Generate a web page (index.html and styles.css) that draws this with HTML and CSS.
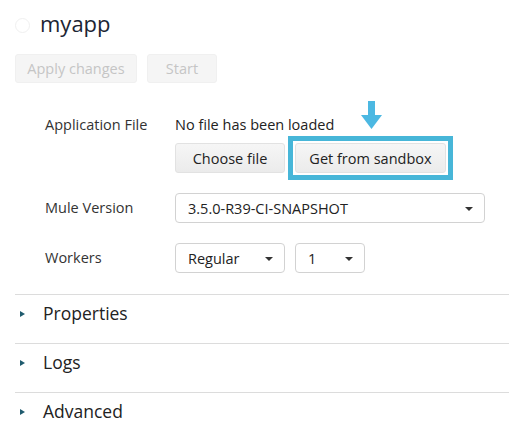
FILE: index.html
```html
<!DOCTYPE html>
<html>
<head>
<meta charset="utf-8">
<link rel="stylesheet" href="styles.css">
</head>
<body>
<div class="page">
  <div class="header">
    <span class="status"></span>
    <h1 class="title">myapp</h1>
  </div>
  <div class="actions">
    <button class="btn btn-disabled btn-apply">Apply changes</button>
    <button class="btn btn-disabled btn-start">Start</button>
  </div>
  <div class="form">
    <div class="label">Application File</div>
    <div class="value">
      <div class="file-status">No file has been loaded</div>
      <div class="file-buttons">
        <button class="btn btn-light btn-choose">Choose file</button>
        <span class="highlight">
          <svg class="arrow" width="22" height="30" viewBox="0 0 22 30">
            <rect x="7" y="0" width="7" height="15" fill="#4cb8e2"/>
            <polygon points="0,14 21,14 10.5,28" fill="#4cb8e2"/>
          </svg>
          <button class="btn btn-light btn-sandbox">Get from sandbox</button>
        </span>
      </div>
    </div>
    <div class="label label-mid">Mule Version</div>
    <div class="value">
      <div class="select select-wide"><span>3.5.0-R39-CI-SNAPSHOT</span><i class="caret"></i></div>
    </div>
    <div class="label label-mid">Workers</div>
    <div class="value workers">
      <div class="select select-type"><span>Regular</span><i class="caret"></i></div>
      <div class="select select-count"><span>1</span><i class="caret"></i></div>
    </div>
  </div>
  <div class="sections">
    <div class="section"><i class="tri"></i><span>Properties</span></div>
    <div class="section"><i class="tri"></i><span>Logs</span></div>
    <div class="section"><i class="tri"></i><span>Advanced</span></div>
  </div>
</div>
</body>
</html>
```
FILE: styles.css
```css
* { box-sizing: border-box; }
html, body { margin: 0; padding: 0; background: #fff; }
body {
  font-family: "Open Sans", "Liberation Sans", sans-serif;
  color: #333;
  font-size: 14.5px;
}
.page { width: 509px; height: 447px; overflow: hidden; }

.header {
  display: flex;
  align-items: center;
  padding: 5px 0 0 15px;
  height: 40px;
}
.status {
  width: 15px; height: 15px;
  border-radius: 50%;
  border: 1px solid #f0f0f0;
  margin-right: 10px;
  margin-top: 5px;
}
.title {
  margin: 0;
  font-size: 22px;
  font-weight: 400;
  color: #1c2533;
  line-height: 30px;
}

.actions {
  display: flex;
  gap: 10px;
  padding: 14px 0 0 15px;
}
.btn {
  font-family: "Open Sans", "Liberation Sans", sans-serif;
  font-size: 14.5px;
  border-radius: 3px;
  padding: 0;
  cursor: default;
}
.btn-disabled {
  height: 29px;
  background: #f5f5f5;
  border: 1px solid #f0f0f0;
  color: #c5c5c5;
}
.btn-apply { width: 122px; }
.btn-start { width: 70px; }

.form {
  display: grid;
  grid-template-columns: 130px 310px;
  margin: 32px 0 0 45px;
  row-gap: 20px;
  align-items: start;
}
.label { line-height: 20px; color: #333; }
.label-mid { align-self: center; }
.file-status { line-height: 20px; color: #222; }
.file-buttons {
  display: flex;
  align-items: center;
  gap: 10px;
  margin-top: 8px;
}
.btn-light {
  height: 30px;
  background: linear-gradient(#f6f6f6, #ebebeb);
  border: 1px solid #e2e2e2;
  color: #222;
}
.btn-choose { width: 110px; }
.btn-sandbox { width: 151px; display: block; }
.highlight {
  position: relative;
  display: block;
  outline: 5px solid #47b6d8;
  outline-offset: 2px;
}
.arrow {
  position: absolute;
  left: 66px;
  top: -42px;
}

.select {
  height: 30px;
  border: 1px solid #d2d2d2;
  border-radius: 4px;
  background: #fff;
  display: flex;
  align-items: center;
  justify-content: space-between;
  padding: 0 11px 0 12px;
  color: #222;
}
.select-wide { width: 310px; }
.workers { display: flex; gap: 10px; }
.select-type { width: 110px; }
.select-count { width: 70px; }
.caret {
  width: 0; height: 0;
  border-left: 4px solid transparent;
  border-right: 4px solid transparent;
  border-top: 4px solid #333;
  margin-top: 1px;
}

.sections { margin: 21px 0 0 15px; }
.section {
  border-top: 1px solid #dcdcdc;
  height: 49px;
  display: flex;
  padding-top: 6px;
  align-items: flex-start;
  line-height: 24px;
  font-size: 17.5px;
  color: #222;
}
.tri {
  width: 0; height: 0;
  border-top: 3px solid transparent;
  border-bottom: 3px solid transparent;
  border-left: 5px solid #1f5b6e;
  margin: 10px 18px 0 5px;
}
```
